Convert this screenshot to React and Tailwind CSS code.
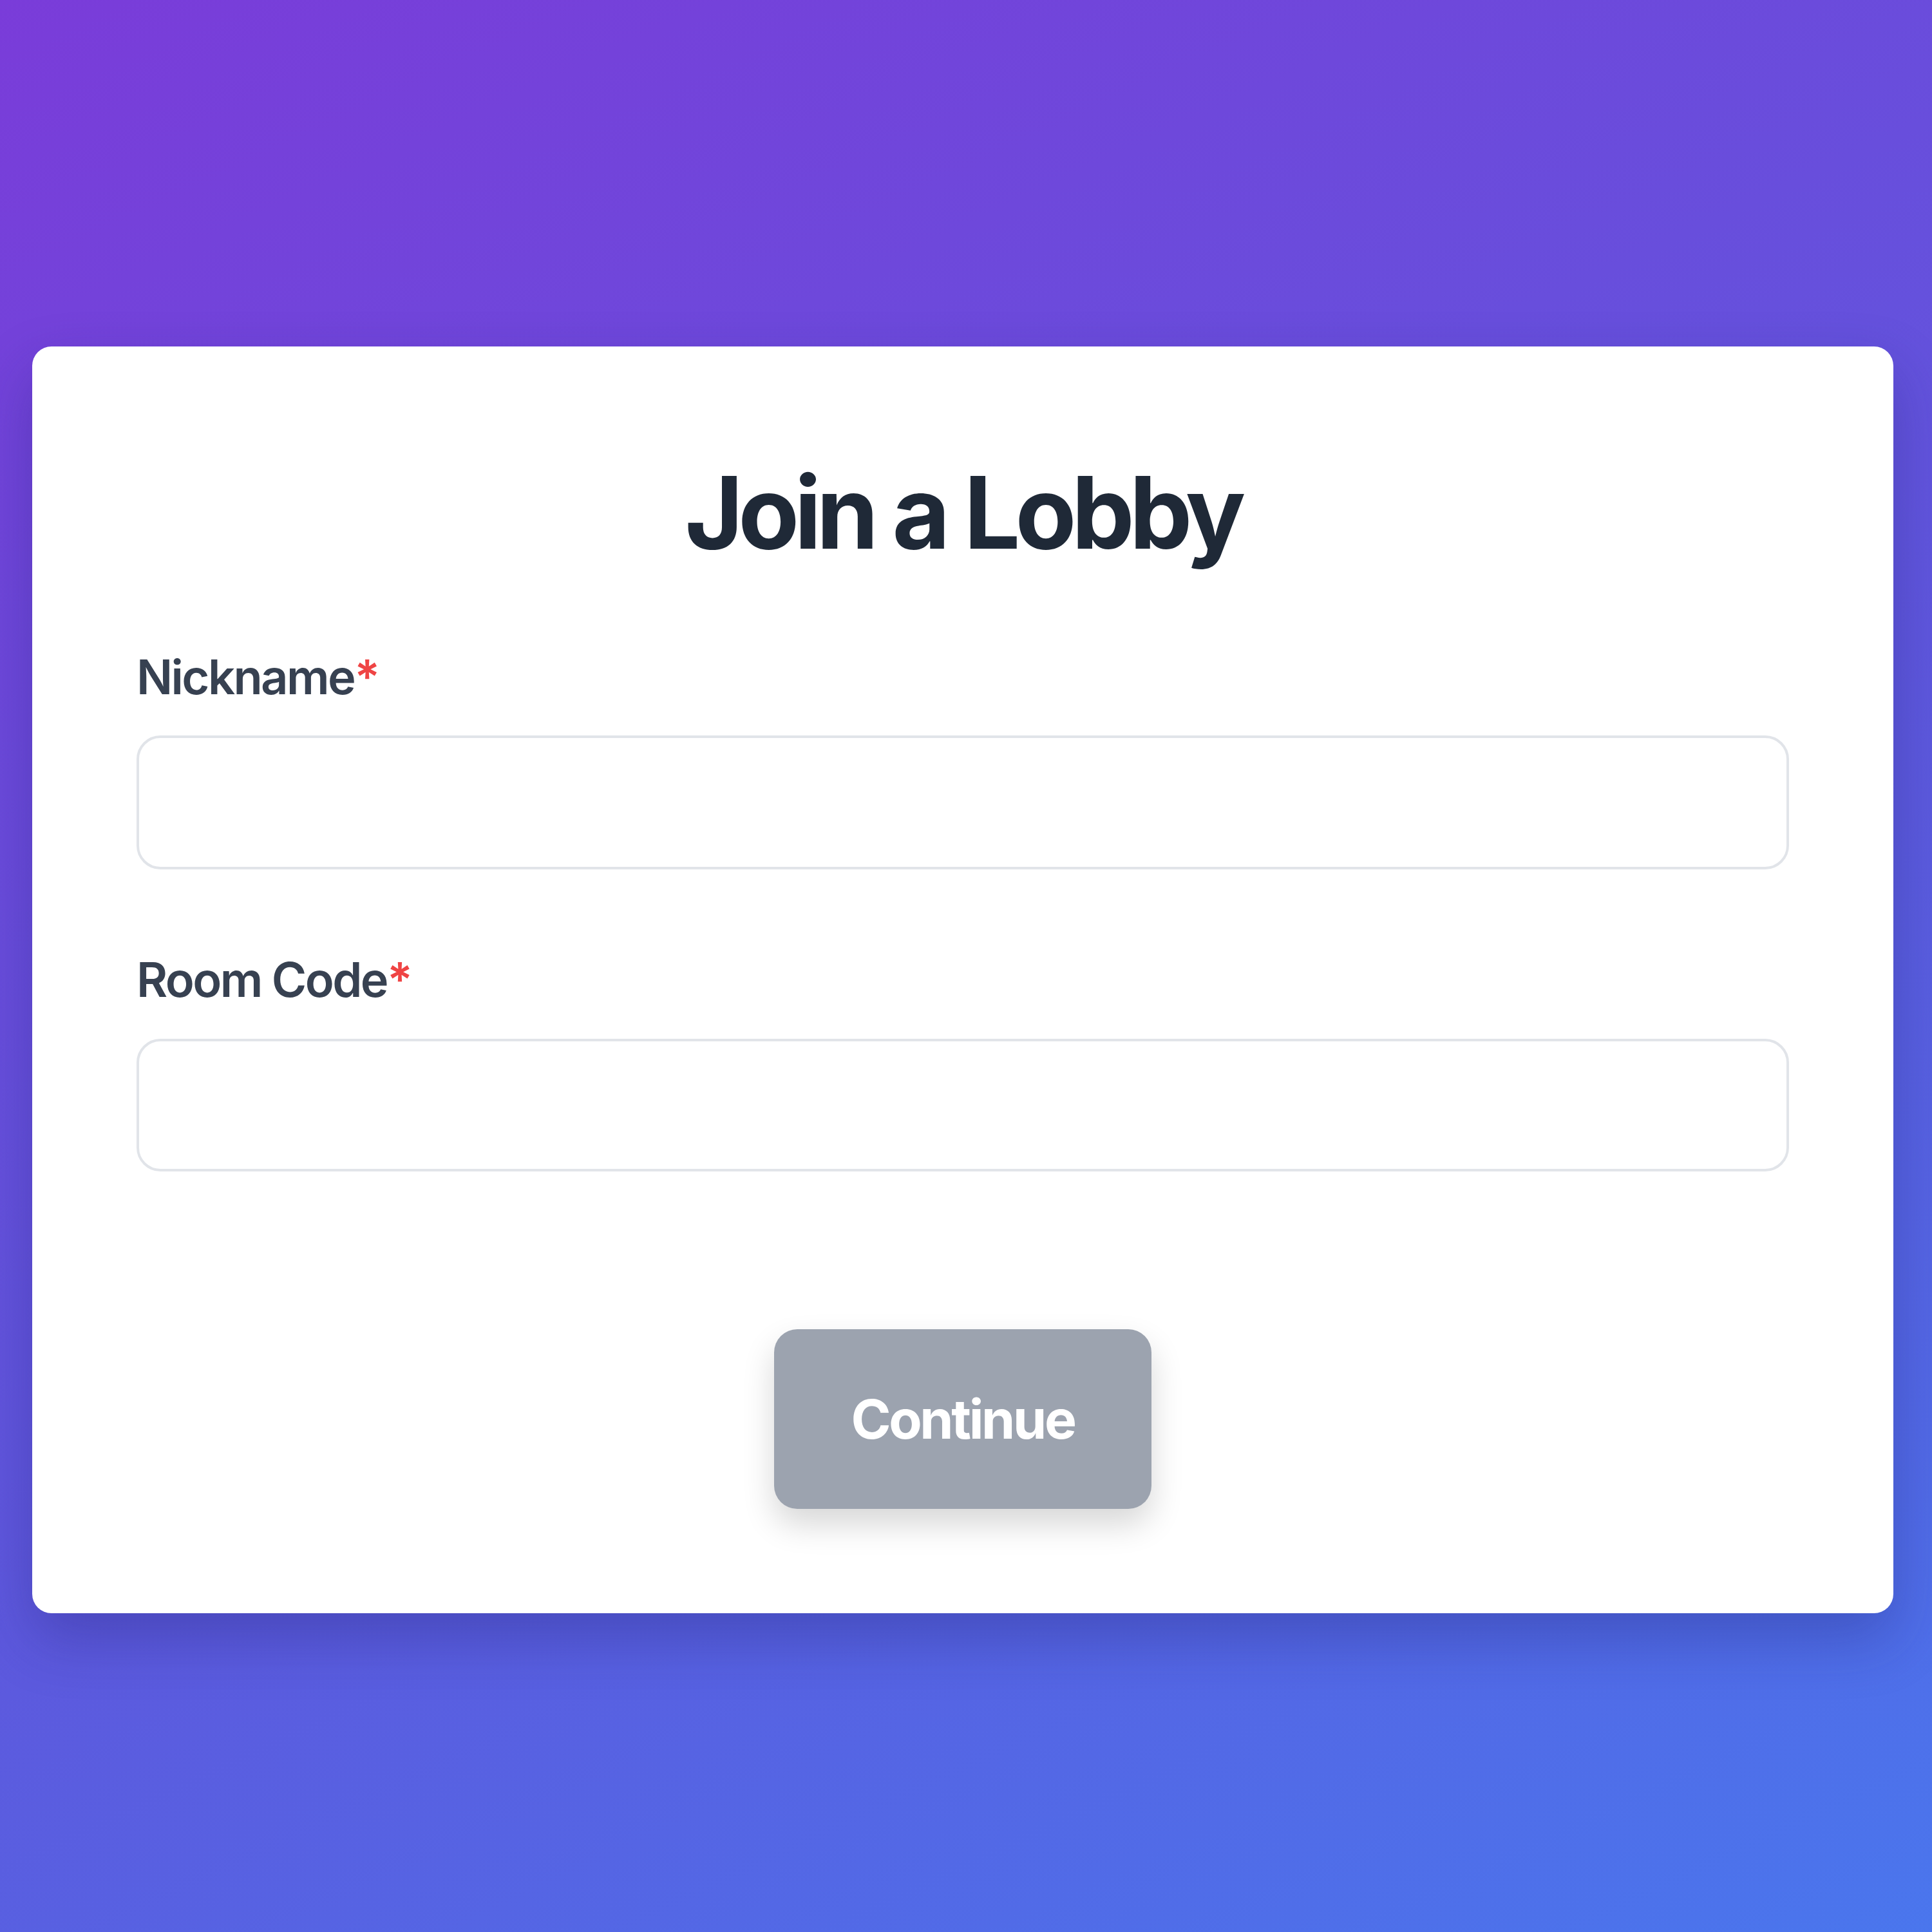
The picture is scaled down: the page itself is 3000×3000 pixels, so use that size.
import React, { useState } from "react";

export default function App() {
  const [nickname, setNickname] = useState("");
  const [roomCode, setRoomCode] = useState("");
  const ready = nickname.trim() && roomCode.trim();

  return (
    <div className="w-[3000px] h-[3000px] bg-[linear-gradient(155deg,#7a3cd9_0%,#5c5ade_60%,#4a76ed_100%)] pt-[538px] pl-[50px] font-['Inter','Noto_Sans',sans-serif]">
      <div className="w-[2890px] bg-white rounded-[30px] shadow-[0_40px_90px_rgba(30,30,110,0.3)] px-[162px] pt-[180px] pb-[162px]">
        <h1 className="text-center text-[155px] leading-none font-bold tracking-[-0.05em] text-[#1f2937]">
          Join a Lobby
        </h1>

        <div className="mt-[123px]">
          <label className="block text-[74px] leading-[111px] font-semibold tracking-[-0.035em] text-[#374151]">
            Nickname<span className="text-[#ef4444]">*</span>
          </label>
          <input
            type="text"
            value={nickname}
            onChange={(e) => setNickname(e.target.value)}
            className="mt-[35px] block w-full h-[208px] rounded-[37px] border-4 border-[#e1e4e9] bg-white px-[50px] text-[74px] text-[#1f2937] outline-none"
          />
        </div>

        <div className="mt-[116px]">
          <label className="block text-[74px] leading-[111px] font-semibold tracking-[-0.035em] text-[#374151]">
            Room Code<span className="text-[#ef4444]">*</span>
          </label>
          <input
            type="text"
            value={roomCode}
            onChange={(e) => setRoomCode(e.target.value)}
            className="mt-[36px] block w-full h-[206px] rounded-[37px] border-4 border-[#e1e4e9] bg-white px-[50px] text-[74px] text-[#1f2937] outline-none"
          />
        </div>

        <div className="mt-[245px] flex justify-center">
          <button
            type="button"
            disabled={!ready}
            className={
              ready
                ? "w-[586px] h-[279px] rounded-[36px] bg-[#4f46e5] text-white text-[84px] font-bold tracking-[-0.04em] shadow-[0_24px_50px_rgba(0,0,0,0.16)]"
                : "w-[586px] h-[279px] rounded-[36px] bg-[#9ca3af] text-white text-[84px] font-bold tracking-[-0.04em] shadow-[0_24px_50px_rgba(0,0,0,0.16)]"
            }
          >
            Continue
          </button>
        </div>
      </div>
    </div>
  );
}
